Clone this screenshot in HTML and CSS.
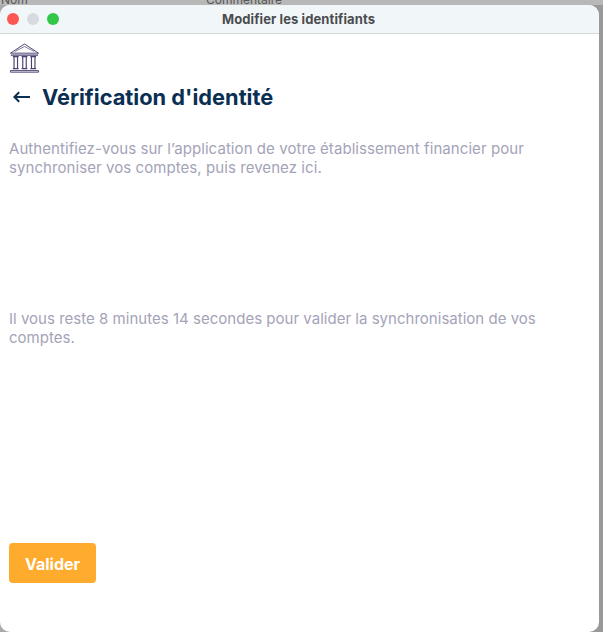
FILE: index.html
```html
<!DOCTYPE html>
<html lang="fr">
<head>
<meta charset="utf-8">
<title>Modifier les identifiants</title>
<link rel="stylesheet" href="styles.css">
</head>
<body>
<div class="backdrop">
  <span class="back-nom">Nom</span>
  <span class="back-com">Commentaire</span>
</div>
<div class="window">
  <header class="titlebar">
    <div class="lights">
      <span class="light red"></span>
      <span class="light grey"></span>
      <span class="light green"></span>
    </div>
    <div class="wintitle">Modifier les identifiants</div>
  </header>
  <main class="content">
    <svg class="bank" width="31" height="31" viewBox="0 0 32 32" fill="#fff" stroke="#4b4170" stroke-width="1">
      <path d="M1.5 10.5 16 1l14.5 9.5z"/>
      <path d="M6 8.8 16 3.6l10 5.2" fill="none" stroke-width=".7"/>
      <path d="M2 12.5h28" stroke-width="1.3"/>
      <path d="M4 14h6M5.2 14v12M8.8 14v12M4 26.5h6" stroke-width="1.2"/>
      <path d="M13 14h6M14.2 14v12M17.8 14v12M13 26.5h6" stroke-width="1.2"/>
      <path d="M22 14h6M23.2 14v12M26.8 14v12M22 26.5h6" stroke-width="1.2"/>
      <path d="M1.5 28.5h29v1.6h-29z" stroke-width="1"/>
    </svg>
    <div class="heading">
      <svg class="arrow" width="17" height="12" viewBox="0 0 17 12" fill="none" stroke="#0b2f53" stroke-width="2">
        <path d="M17 6H1.6M6.2 1.2 1.4 6l4.8 4.8"/>
      </svg>
      <h1>Vérification d'identité</h1>
    </div>
    <p class="text first">Authentifiez-vous sur l’application de votre établissement financier pour synchroniser vos comptes, puis revenez ici.</p>
    <p class="text second">Il vous reste 8 minutes 14 secondes pour valider la synchronisation de vos comptes.</p>
    <button class="submit">Valider</button>
  </main>
</div>
</body>
</html>
```
FILE: styles.css
```css
* { box-sizing: border-box; }
html, body { margin: 0; height: 632px; overflow: hidden; }
body {
  background: linear-gradient(90deg, #a9a9a9, #999);
  font-family: "Inter", "Liberation Sans", sans-serif;
  width: 603px;
}
.backdrop {
  height: 5px;
  overflow: hidden;
  display: flex;
  font-size: 12px;
  line-height: 5px;
  color: #555;
  background: #b8b8b8;
}
.back-nom { padding-left: 1px; width: 206px; margin-top: -3px; }
.back-com { margin-top: -3px; }
.window {
  width: 599px;
  height: 627px;
  background: #fff;
  border-radius: 10px;
  overflow: hidden;
  display: flex;
  flex-direction: column;
}
.titlebar {
  height: 29px;
  flex: none;
  background: #f1f6f9;
  border-bottom: 1px solid #d6dadb;
  display: grid;
  grid-template-columns: 1fr auto 1fr;
  align-items: center;
}
.lights { display: flex; gap: 8px; padding-left: 7px; }
.light { width: 12px; height: 12px; border-radius: 50%; }
.red { background: #fc5753; }
.grey { background: #d7dbdf; }
.green { background: #33c748; }
.wintitle { font-size: 13px; font-weight: 700; color: #4a4c4e; letter-spacing: 0.1px; transform: translateX(-1px); }
.content {
  flex: 1;
  padding: 9px 9px 49px;
  display: flex;
  flex-direction: column;
  align-items: flex-start;
}
.bank { display: block; flex: none; }
.heading { display: flex; align-items: center; margin-top: 9px; height: 28px; }
.arrow { margin: 0 12px 0 4px; flex: none; }
h1 { margin: 0; font-size: 21.8px; font-weight: 700; color: #0b2f53; letter-spacing: 0; white-space: nowrap; }
.text { margin: 0; font-size: 15px; line-height: 19px; color: #a4a3b8; width: 540px; letter-spacing: 0.07px; }
.first { margin-top: 28px; }
.second { margin-top: 132px; letter-spacing: 0.02px; }
.submit {
  margin-top: auto;
  width: 87px;
  height: 40px;
  border: 0;
  border-radius: 4px;
  background: #ffab2e;
  color: #fff;
  padding: 2px 0 0;
  font: 700 16px "Inter", "Liberation Sans", sans-serif;
}
```
